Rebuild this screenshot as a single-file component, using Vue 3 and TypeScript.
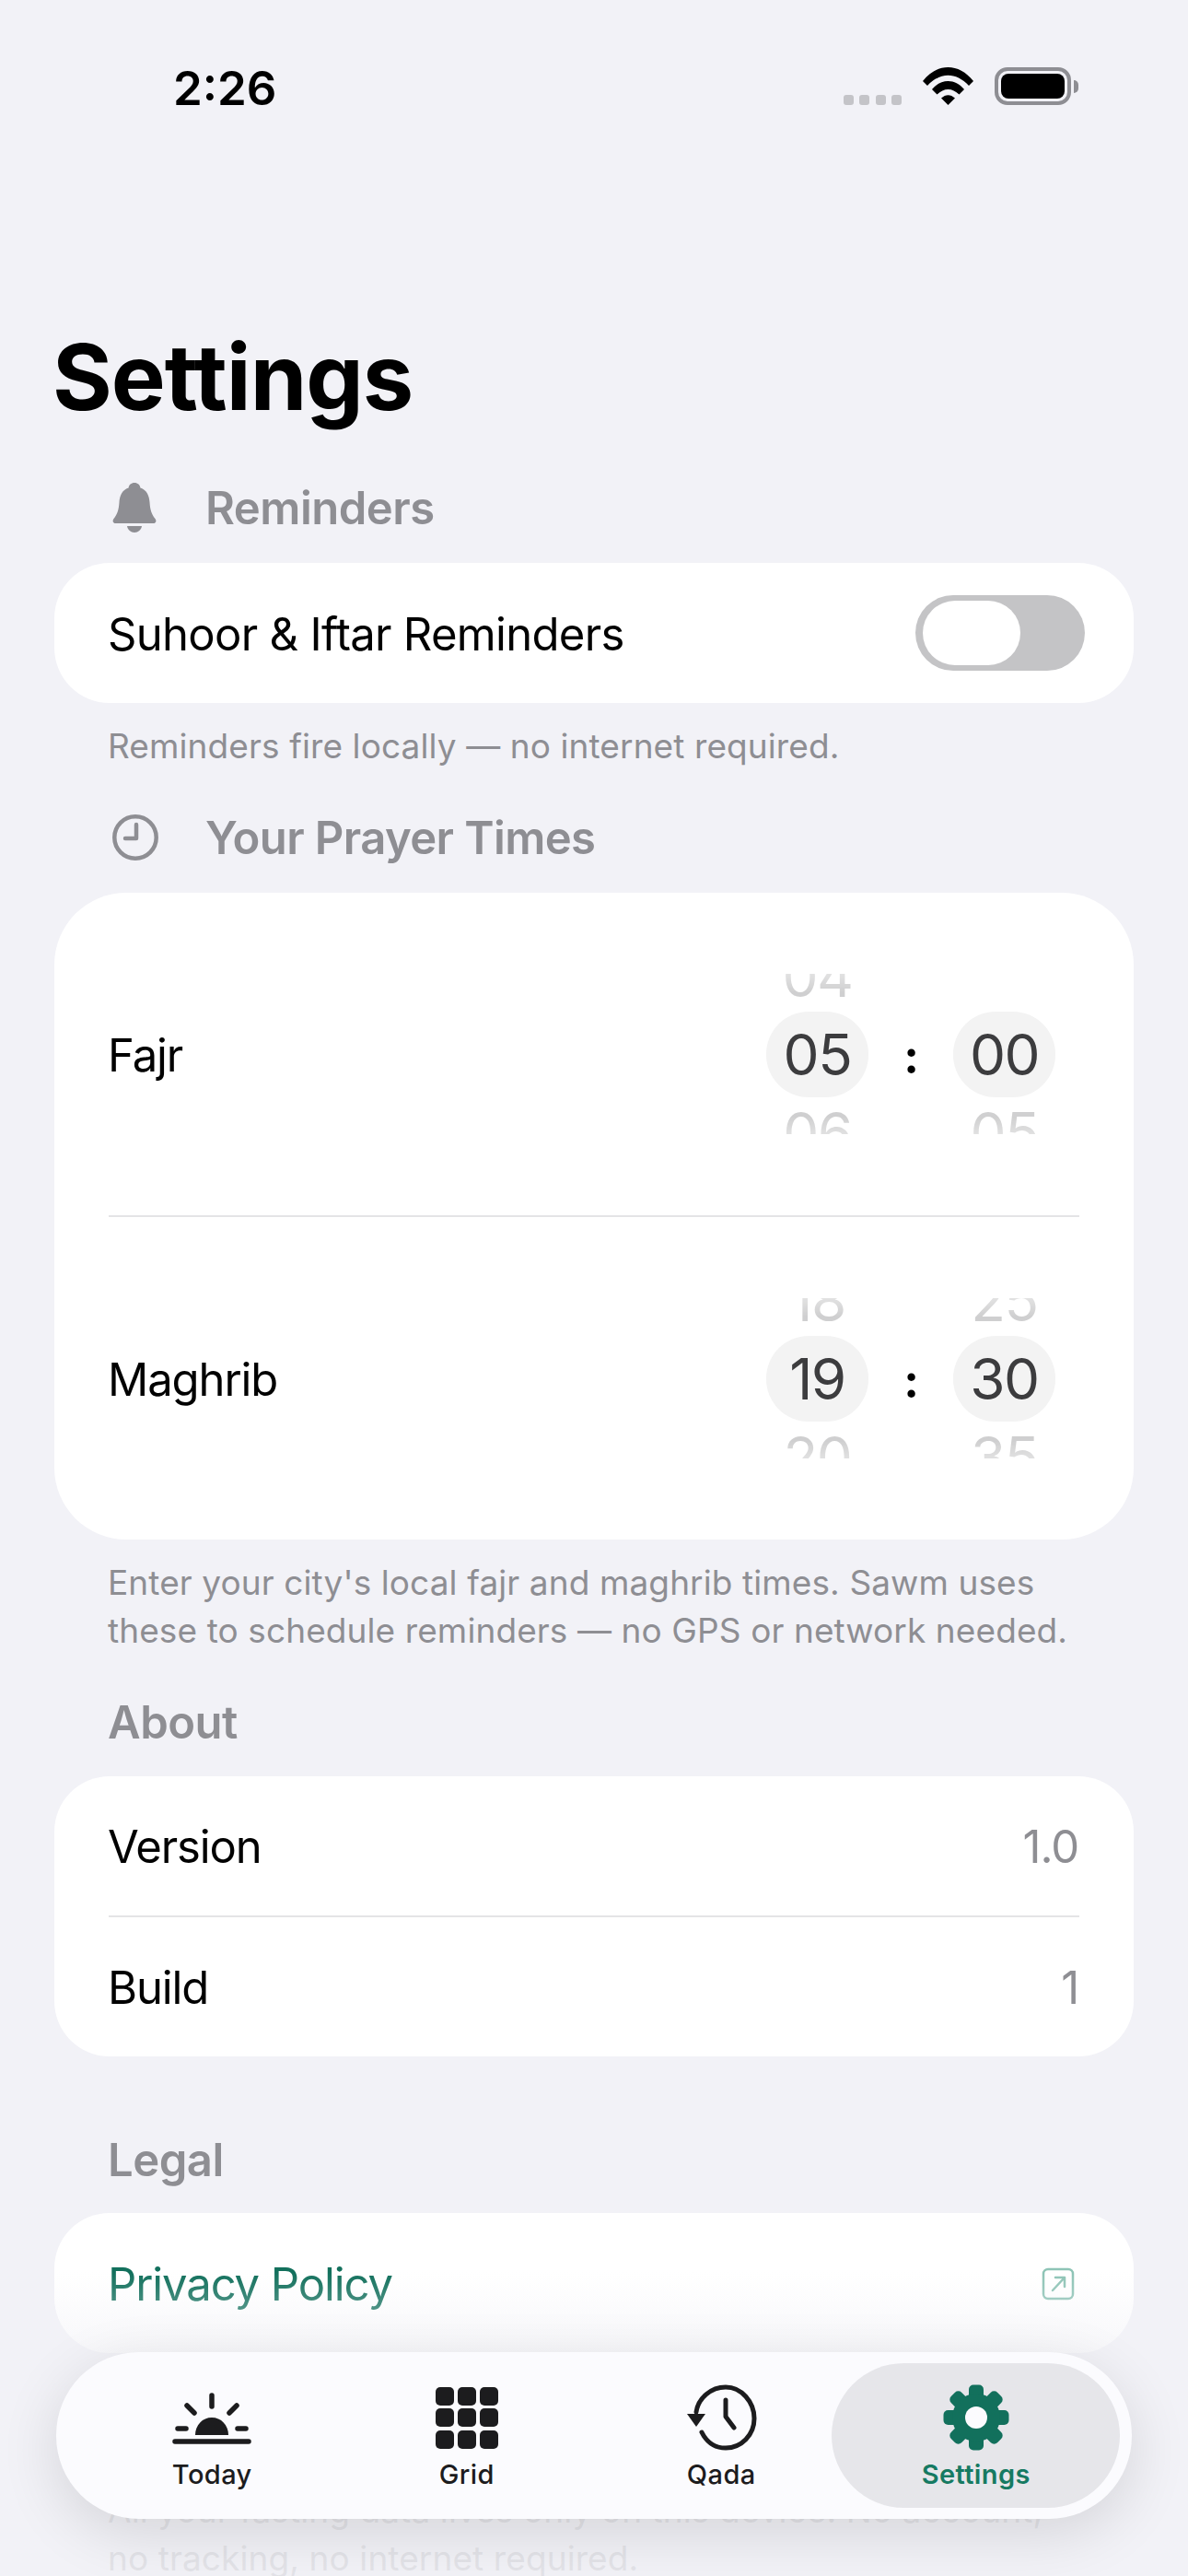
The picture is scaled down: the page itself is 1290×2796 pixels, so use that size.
<script setup lang="ts">
interface Wheel { prev: string; cur: string; next: string }
interface Prayer { name: string; hour: Wheel; minute: Wheel }

const prayers: Prayer[] = [
  { name: 'Fajr', hour: { prev: '04', cur: '05', next: '06' }, minute: { prev: '', cur: '00', next: '05' } },
  { name: 'Maghrib', hour: { prev: '18', cur: '19', next: '20' }, minute: { prev: '25', cur: '30', next: '35' } },
]
const gearTeeth = [0, 45, 90, 135, 180, 225, 270, 315]
const gridCells = [0, 1, 2, 3, 4, 5, 6, 7, 8]
</script>

<template>
  <div class="screen">
    <header class="status">
      <span class="time">2:26</span>
      <div class="status-right">
        <div class="dots"><i></i><i></i><i></i><i></i></div>
        <svg class="wifi" viewBox="0 0 55 41" width="55" height="41">
          <path d="M0 15 C16 -5 39 -5 55 15 L50 20 C36 5 19 5 5 20Z" fill="#000" />
          <path d="M10 24 C20 12 35 12 45 24 L39.5 29.5 C32 22 23 22 15.500 29.500Z" fill="#000" />
          <path d="M20 33.500 C25 29 30 29 35 33.500 L27.500 41Z" fill="#000" />
        </svg>
        <div class="battery"><div class="battery-body"><div class="battery-fill"></div></div><div class="battery-nub"></div></div>
      </div>
    </header>

    <main class="content">
      <h1 class="title">Settings</h1>

      <div class="section-head head-reminders">
        <span class="head-icon">
          <svg viewBox="0 0 48 54" width="48" height="54">
            <path d="M24 0c3.500 0 6 2.300 6.400 5.500C37.500 7.800 40 14 40.500 21c.5 8.500 2 13 6 18 1.800 2.400.8 5-2.200 5H3.700c-3 0-4-2.600-2.200-5 4-5 5.500-9.500 6-18C8 14 10.500 7.800 17.600 5.500 18 2.300 20.500 0 24 0z" fill="#8e8e93" />
            <path d="M16 47h16c-.6 4-4 7-8 7s-7.400-3-8-7z" fill="#8e8e93" />
          </svg>
        </span>
        <span>Reminders</span>
      </div>
      <section class="card">
        <div class="row">
          <span class="toggle-label">Suhoor &amp; Iftar Reminders</span>
          <div class="toggle"><div class="knob"></div></div>
        </div>
      </section>
      <p class="note">Reminders fire locally — no internet required.</p>

      <div class="section-head head-times">
        <span class="head-icon">
          <svg viewBox="0 0 50 50" width="50" height="50" fill="none" stroke="#8e8e93">
            <circle cx="25" cy="25" r="22.700" stroke-width="4.500" />
            <path d="M26 11v15H14" stroke-width="4.500" stroke-linecap="round" stroke-linejoin="round" />
          </svg>
        </span>
        <span class="head-times-text">Your Prayer Times</span>
      </div>
      <section class="card times">
        <template v-for="(p, i) in prayers" :key="p.name">
          <div v-if="i > 0" class="divider"></div>
          <div class="time-row">
            <span class="time-name">{{ p.name }}</span>
            <div class="picker">
              <div class="wheel">
                <div class="pill"></div>
                <span>{{ p.hour.prev }}</span><span class="cur">{{ p.hour.cur }}</span><span>{{ p.hour.next }}</span>
              </div>
              <b class="colon">:</b>
              <div class="wheel">
                <div class="pill"></div>
                <span>{{ p.minute.prev }}</span><span class="cur">{{ p.minute.cur }}</span><span>{{ p.minute.next }}</span>
              </div>
            </div>
          </div>
        </template>
      </section>
      <p class="note">Enter your city's local fajr and maghrib times. Sawm uses<br />these to schedule reminders — no GPS or network needed.</p>

      <div class="plain-head head-about">About</div>
      <section class="card about">
        <div class="row"><span>Version</span><span class="value">1.0</span></div>
        <div class="divider"></div>
        <div class="row"><span>Build</span><span class="value">1</span></div>
      </section>

      <div class="plain-head head-legal">Legal</div>
      <section class="card">
        <div class="row">
          <span class="link">Privacy Policy</span>
          <svg class="ext" viewBox="0 0 36 36" width="36" height="36" fill="none" stroke="#1f8a6e" stroke-width="2.500">
            <rect x="2" y="2" width="32" height="32" rx="5" />
            <path d="M12 25 25 11M15 11h10v10" stroke-linecap="round" stroke-linejoin="round" />
          </svg>
        </div>
      </section>
      <p class="note note-last">All your fasting data lives only on this device. No account,<br />no tracking, no internet required.</p>
    </main>

    <div class="fade"></div>

    <nav class="tabbar">
      <div class="tab">
        <span class="tab-icon">
          <svg viewBox="0 0 96 60" width="96" height="60" fill="none" stroke="#1c1c1e" stroke-width="5.500" stroke-linecap="round">
            <path d="M48 6v12M21 17l8 8M75 17l-8 8M11 42h9M76 42h9M8 56h80" />
            <path d="M30 49c0-11 8-19 18-19s18 8 18 19z" fill="#1c1c1e" stroke="none" />
          </svg>
        </span>
        <span class="tab-label">Today</span>
      </div>
      <div class="tab">
        <span class="tab-icon">
          <div class="grid-icon"><i v-for="c in gridCells" :key="c"></i></div>
        </span>
        <span class="tab-label">Grid</span>
      </div>
      <div class="tab">
        <span class="tab-icon">
          <svg viewBox="0 0 78 72" width="78" height="72" fill="none" stroke="#1c1c1e" stroke-width="5" stroke-linecap="round" stroke-linejoin="round">
            <path d="M18 52C24 64 34 69 44 69c17 0 31-14 31-32S61 3 44 3C28 3 14 15 12 30" />
            <path d="M44 17v18l9 12" />
            <path d="M2 32h20L12 46z" fill="#1c1c1e" stroke="none" />
          </svg>
        </span>
        <span class="tab-label">Qada</span>
      </div>
      <div class="tab active">
        <span class="tab-icon">
          <svg viewBox="0 0 72 72" width="72" height="72">
            <rect v-for="a in gearTeeth" :key="a" x="28" y="0.500" width="16" height="20" rx="5" fill="#12705c" :transform="`rotate(${a} 36 36)`" />
            <circle cx="36" cy="36" r="26" fill="#12705c" />
            <circle cx="36" cy="36" r="12" fill="#fbfbfe" />
          </svg>
        </span>
        <span class="tab-label">Settings</span>
      </div>
    </nav>
  </div>
</template>

<style scoped>
.screen {
  position: relative;
  width: 1290px;
  height: 2796px;
  overflow: hidden;
  background: #f2f2f7;
  font-family: Inter, "Liberation Sans", sans-serif;
  color: #000;
}
.status {
  height: 130px;
  padding: 64px 119px 0 188px;
  box-sizing: border-box;
  display: flex;
  justify-content: space-between;
  align-items: flex-start;
}
.time { font-size: 51px; font-weight: 600; line-height: 64px; }
.status-right { display: flex; align-items: flex-end; margin-top: 9px; height: 41px; }
.dots { display: flex; gap: 6.500px; margin-right: 23px; }
.dots i { width: 11px; height: 11px; border-radius: 3px; background: #c4c4c8; }
.wifi { margin-right: 23px; display: block; }
.battery { display: flex; align-items: center; }
.battery-body {
  width: 83px; height: 41px; box-sizing: border-box;
  border: 4px solid #8e8e93; border-radius: 14px; padding: 3px;
}
.battery-fill { width: 100%; height: 100%; background: #000; border-radius: 8px; }
.battery-nub { width: 5px; height: 14px; margin-left: 3px; background: #8e8e93; border-radius: 0 6px 6px 0; }

.content { padding: 0 59px; }
.title {
  margin: 0 0 0 -2px; padding-top: 219px;
  font-size: 99px; line-height: 120px; font-weight: 700; letter-spacing: -1px;
}
.section-head {
  display: flex; align-items: center; height: 60px;
  font-size: 49px; font-weight: 600; color: #8e8e93; letter-spacing: -.5px;
}
.head-reminders { margin-top: 52px; }
.head-times { margin-top: 43px; }
.head-times-text { letter-spacing: -.6px; }
.head-icon { width: 164px; padding-left: 63px; box-sizing: border-box; display: flex; align-items: center; }
.head-icon svg { display: block; flex: none; }
.card { background: #fff; border-radius: 60px; overflow: hidden; margin-top: 30px; }
.row {
  height: 152px; padding: 2px 60px 0 58px; box-sizing: border-box; display: flex; align-items: center; justify-content: space-between;
  font-size: 49px; letter-spacing: -1.1px;
}
.toggle-label { letter-spacing: -.7px; }
.toggle { margin-top: -2px; }
.about .row { height: 151px; }
.value { color: #8e8e93; }
.link { color: #12705c; }
.ext { opacity: .5; margin-right: 4px; }
.toggle {
  width: 184px; height: 82px; background: #c4c4c6; border-radius: 41px; padding: 6px 8px; box-sizing: border-box; margin-right: -7px;
}
.knob { width: 106px; height: 70px; background: #fff; border-radius: 35px; }
.note { margin: 21px 0 0 58px; font-size: 37px; line-height: 52px; color: #8e8e93; letter-spacing: .1px; }
.times { border-radius: 78px; }
.divider { height: 2px; background: #e4e4e6; margin: 0 59px; }
.time-row {
  height: 350px; padding: 0 85px 0 58px; display: flex; align-items: center; justify-content: space-between;
  font-size: 49px; letter-spacing: -1.1px;
}
.time-name { padding-top: 2px; }
.picker { display: flex; align-items: center; }
.colon { width: 92px; text-align: center; font-size: 50px; font-weight: 700; line-height: 174px; padding-top: 3px; box-sizing: border-box; height: 174px; }
.wheel {
  position: relative; width: 111px; height: 174px; overflow: hidden;
  display: flex; flex-direction: column; align-items: center; justify-content: center;
  font-size: 62px; color: #3c3c3e; letter-spacing: -1.500px;
}
.wheel span { height: 85px; line-height: 85px; flex: none; position: relative; opacity: .24; }
.wheel span:first-of-type { -webkit-mask-image: linear-gradient(to top, #000 30%, transparent 90%); mask-image: linear-gradient(to top, #000 30%, transparent 90%); }
.wheel span:last-of-type { -webkit-mask-image: linear-gradient(to bottom, #000 30%, transparent 90%); mask-image: linear-gradient(to bottom, #000 30%, transparent 90%); }
.wheel .cur { opacity: 1; }
.pill { position: absolute; left: 0; top: 41px; width: 111px; height: 93px; border-radius: 46px; background: #f3f3f3; }
.plain-head { font-size: 49px; font-weight: 600; color: #8e8e93; letter-spacing: -.5px; height: 60px; line-height: 60px; margin-left: 58px; }
.head-about { margin-top: 44px; margin-bottom: -2px; }
.head-legal { margin-top: 83px; margin-bottom: -3px; }
.note-last { margin-top: 145px; }

.fade {
  position: absolute; left: 0; right: 0; bottom: 0; height: 330px;
  background: linear-gradient(to bottom, rgba(242,242,247,0), rgba(242,242,247,.6) 27%, rgba(242,242,247,.85) 50%, rgba(242,242,247,.85));
}
.tabbar {
  position: absolute; left: 61px; top: 2553px; width: 1168px; height: 181px; box-sizing: border-box;
  padding: 12px 31px; border-radius: 90px; background: #fbfbfe;
  box-shadow: 0 16px 64px rgba(0,0,0,.12);
  display: grid; grid-template-columns: repeat(4, 1fr);
}
.tab { position: relative; display: flex; flex-direction: column; align-items: center; justify-content: flex-start; color: #1c1c1e; }
.tab.active::before {
  content: ""; position: absolute; left: -19px; right: -18px; top: 0; bottom: 0;
  background: #e6e6ea; border-radius: 79px;
}
.tab-icon { position: relative; height: 74px; margin-top: 22px; display: flex; align-items: center; justify-content: center; }
.tab-label { position: relative; font-size: 29px; line-height: 36px; font-weight: 500; margin-top: 7px; letter-spacing: .4px; }
.active .tab-label { color: #167a62; font-weight: 600; }
.grid-icon { display: grid; grid-template-columns: repeat(3, 20px); grid-auto-rows: 20px; gap: 3.500px 4px; }
.grid-icon i { background: #1c1c1e; border-radius: 5px; }
</style>
